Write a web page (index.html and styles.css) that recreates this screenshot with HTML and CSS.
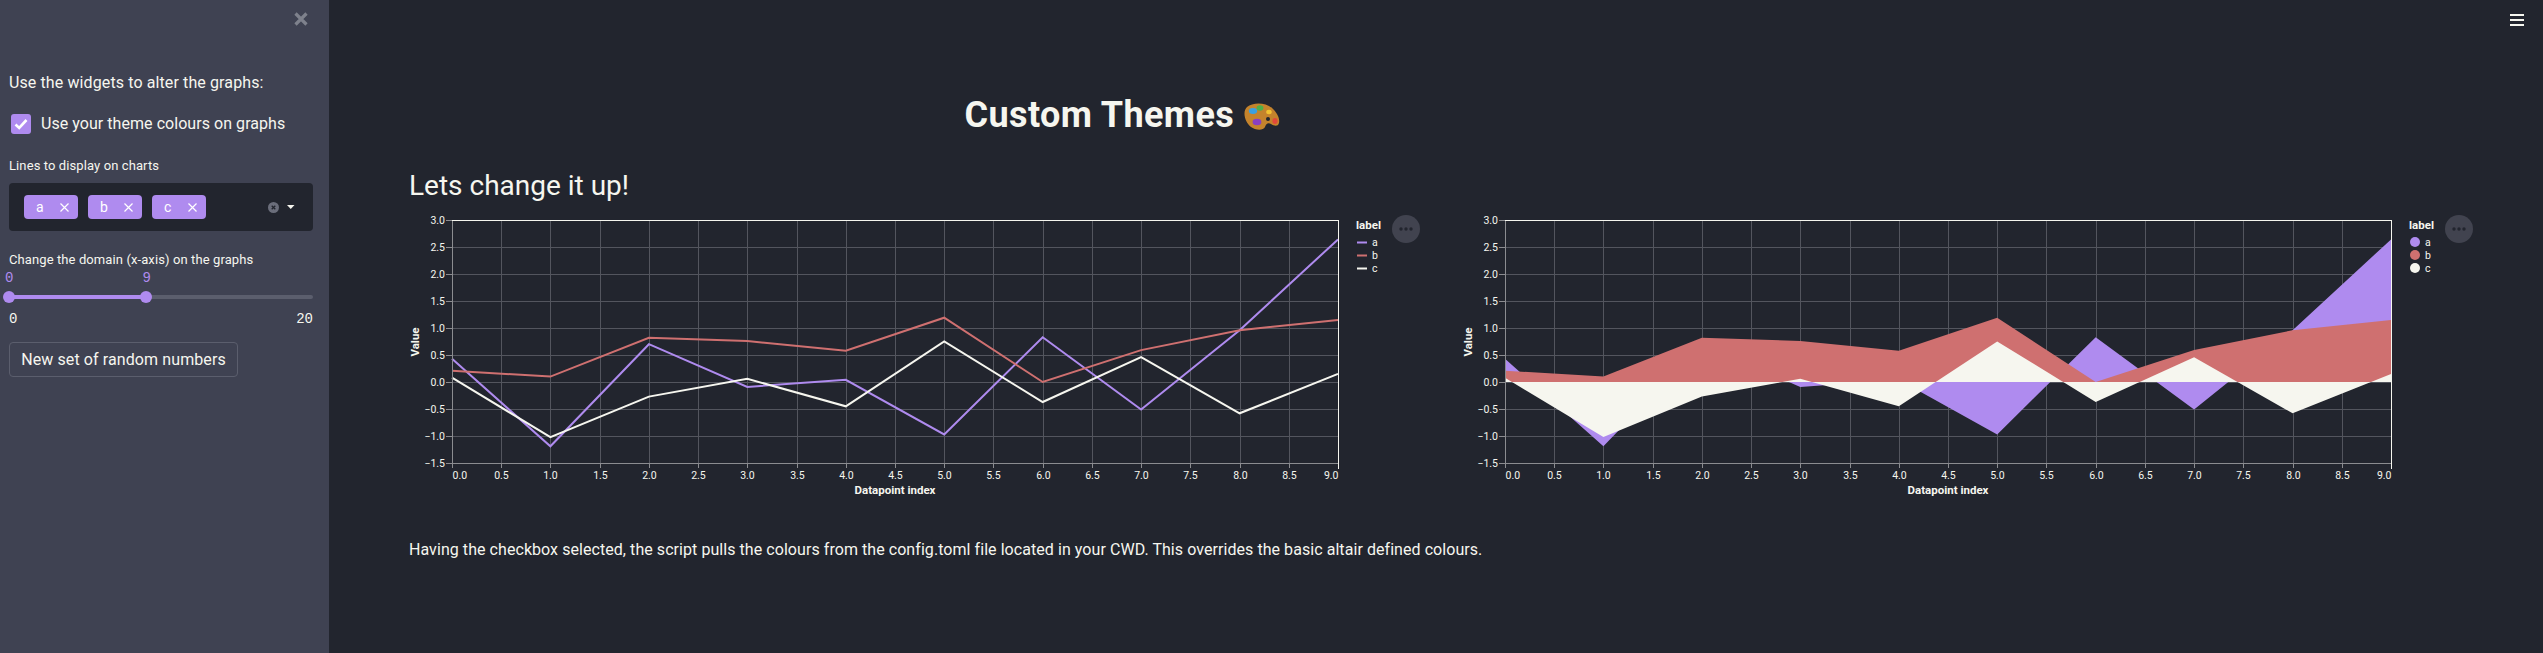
FILE: index.html
```html
<!DOCTYPE html>
<html lang="en">
<head>
    <meta charset="UTF-8">
    <title>Custom Themes</title>
    <link rel="stylesheet" href="styles.css">
</head>
<body>
<div class="app">
    <div class="sidebar">
        <div class="side-close">
            <svg width="14" height="14" viewBox="0 0 14 14"><path d="M1.5 1.5L12.5 12.5M12.5 1.5L1.5 12.5" stroke="#7e818c" stroke-width="3.2" fill="none"/></svg>
        </div>
        <p class="side-intro">Use the widgets to alter the graphs:</p>
        <div class="check-row">
            <span class="check-box">
                <svg width="14" height="12" viewBox="0 0 14 12"><path d="M1.5 6.5L5.2 10L12.5 2" stroke="#fff" stroke-width="2.6" fill="none"/></svg>
            </span>
            <span>Use your theme colours on graphs</span>
        </div>
        <div class="field-label">Lines to display on charts</div>
        <div class="multi">
            <span class="tag">a<svg width="9" height="9" viewBox="0 0 9 9"><path d="M0.5 0.5L8.5 8.5M8.5 0.5L0.5 8.5" stroke="#fff" stroke-width="1.2"/></svg></span>
            <span class="tag">b<svg width="9" height="9" viewBox="0 0 9 9"><path d="M0.5 0.5L8.5 8.5M8.5 0.5L0.5 8.5" stroke="#fff" stroke-width="1.2"/></svg></span>
            <span class="tag">c<svg width="9" height="9" viewBox="0 0 9 9"><path d="M0.5 0.5L8.5 8.5M8.5 0.5L0.5 8.5" stroke="#fff" stroke-width="1.2"/></svg></span>
            <span class="multi-end">
                <svg width="11" height="11" viewBox="0 0 11 11"><circle cx="5.5" cy="5.5" r="5.5" fill="#6b6e7b"/><path d="M3.7 3.7L7.3 7.3M7.3 3.7L3.7 7.3" stroke="#22252e" stroke-width="1.3"/></svg>
                <svg width="8" height="4" viewBox="0 0 8 4"><path d="M0 0H7.5L3.75 4Z" fill="#f6f6ef"/></svg>
            </span>
        </div>
        <div class="field-label slider-label">Change the domain (x-axis) on the graphs</div>
        <div class="slider">
            <div class="slider-vals"><span>0</span><span class="val-nine">9</span></div>
            <div class="track">
                <div class="track-fill"></div>
                <span class="thumb thumb-a"></span>
                <span class="thumb thumb-b"></span>
            </div>
            <div class="slider-ends"><span>0</span><span>20</span></div>
        </div>
        <button class="btn">New set of random numbers</button>
    </div>
    <div class="main">
        <div class="hamburger"><span></span><span></span><span></span></div>
        <h1 class="title">Custom Themes
            <svg class="palette" width="36" height="28" viewBox="0 0 36 28">
                <path d="M3 4C9 -1 22 -1 29 6C33 10 36 15 35 20C34 24 30 23 27 21C24 19 22 21 21 24C19 28 11 27 7 24C1 19 -2 9 3 4Z" fill="#c4832c"/>
                <ellipse cx="9" cy="8" rx="4.2" ry="3" fill="#3aa0e0"/>
                <ellipse cx="16" cy="5" rx="3.4" ry="2.8" fill="#4cb04a"/>
                <ellipse cx="25" cy="9" rx="2.8" ry="2.2" fill="#f2c230"/>
                <ellipse cx="13" cy="19" rx="4.4" ry="3.2" fill="#8a3fc0"/>
                <ellipse cx="31" cy="18" rx="2.6" ry="3" fill="#e2483a"/>
                <circle cx="24" cy="16" r="2" fill="#22252e"/>
            </svg>
        </h1>
        <h2 class="sub">Lets change it up!</h2>
        <div class="charts">
            <div class="chart" id="lineChart"></div>
            <div class="chart" id="areaChart"></div>
        </div>
        <p class="note">Having the checkbox selected, the script pulls the colours from the config.toml file located in your CWD. This overrides the basic altair defined colours.</p>
    </div>
</div>
<script src="chart.js"></script>
</body>
</html>
```
FILE: styles.css
```css
* {
    box-sizing: border-box;
    margin: 0;
    padding: 0;
}

html, body {
    height: 100%;
    overflow: hidden;
    background: #22252e;
}

body {
    font-family: "Roboto", "Noto Sans", sans-serif;
    color: #f6f6ef;
    font-size: 16px;
}

.app {
    display: flex;
    height: 100%;
}

/* sidebar */
.sidebar {
    width: 329px;
    flex: none;
    background: #3f4252;
    padding: 0 16px 0 9px;
}

.side-close {
    display: flex;
    justify-content: flex-end;
    padding: 12px 5px 0 0;
    height: 71px;
}

.side-intro {
    line-height: 24px;
    letter-spacing: .11px;
}

.check-row {
    display: flex;
    align-items: center;
    gap: 10px;
    margin: 17px 0 0 2px;
    line-height: 24px;
    letter-spacing: .05px;
}

.check-box {
    width: 20px;
    height: 20px;
    border-radius: 3px;
    background: #af8bef;
    display: flex;
    align-items: center;
    justify-content: center;
}

.field-label {
    font-size: 13px;
    line-height: 18px;
    margin-top: 21px;
    letter-spacing: .1px;
}

.multi {
    height: 48px;
    margin-top: 8px;
    background: #22252e;
    border-radius: 4px;
    display: flex;
    align-items: center;
    gap: 10px;
    padding-left: 15px;
}

.tag {
    width: 54px;
    height: 24px;
    background: #af8bef;
    border-radius: 4px;
    color: #fff;
    font-size: 14px;
    display: flex;
    align-items: center;
    justify-content: space-between;
    padding: 0 9px 0 12px;
}

.multi-end {
    margin-left: auto;
    display: flex;
    align-items: center;
    gap: 8px;
    padding-right: 18px;
}

.slider-label {
    margin-top: 20px;
}

.slider {
    font-family: "Liberation Mono", "DejaVu Sans Mono", monospace;
    font-size: 14px;
}

.slider-vals {
    display: flex;
    height: 18px;
    line-height: 18px;
    color: #af8bef;
    margin-left: -4px;
}

.val-nine {
    margin-left: 129px;
}

.track {
    position: relative;
    height: 4px;
    margin-top: 8px;
    background: #5b5e6d;
    border-radius: 2px;
}

.track-fill {
    width: 137px;
    height: 4px;
    background: #af8bef;
}

.thumb {
    position: absolute;
    top: -4px;
    width: 12px;
    height: 12px;
    margin-left: -6px;
    border-radius: 50%;
    background: #af8bef;
}

.thumb-a {
    left: 0;
}

.thumb-b {
    left: 137px;
}

.slider-ends {
    display: flex;
    justify-content: space-between;
    line-height: 18px;
    margin-top: 11px;
}

.btn {
    display: block;
    width: 229px;
    height: 35px;
    margin-top: 14px;
    background: transparent;
    border: 1px solid #5b5e6d;
    border-radius: 4px;
    color: #f6f6ef;
    font-family: inherit;
    font-size: 16px;
    letter-spacing: .1px;
}

/* main area */
.main {
    flex: 1;
    position: relative;
    padding: 0 0 0 80px;
}

.hamburger {
    position: absolute;
    right: 19px;
    top: 14px;
    width: 14px;
    display: flex;
    flex-direction: column;
    gap: 3px;
}

.hamburger span {
    height: 2px;
    background: #f6f6ef;
}

.title {
    width: 1426px;
    margin-top: 92px;
    height: 46px;
    font-size: 36px;
    line-height: 46px;
    font-weight: 700;
    text-align: center;
    letter-spacing: .4px;
}

.palette {
    vertical-align: -4px;
}

.sub {
    font-size: 28px;
    font-weight: 400;
    line-height: 36px;
    margin-top: 30px;
}

.charts {
    display: flex;
    gap: 16px;
    margin-top: 8px;
}

.chart {
    width: 1037px;
    height: 290px;
}

.chart svg {
    display: block;
}

.tick-label {
    font-size: 10.5px;
    fill: #f6f6ef;
}

.axis-title {
    font-size: 11.5px;
    font-weight: 700;
    fill: #f6f6ef;
}

.note {
    line-height: 24px;
    margin-top: 36px;
    letter-spacing: .06px;
}
```
FILE: chart.js
```js
// same ten points drive the line chart and the area chart
var series = [
    {name: "a", color: "#af8bef", values: [0.43, -1.19, 0.70, -0.09, 0.04, -0.97, 0.83, -0.51, 0.96, 2.64]},
    {name: "b", color: "#cf7070", values: [0.21, 0.10, 0.82, 0.76, 0.58, 1.19, 0.00, 0.59, 0.96, 1.15]},
    {name: "c", color: "#f6f6ef", values: [0.08, -1.02, -0.27, 0.06, -0.45, 0.75, -0.37, 0.46, -0.58, 0.15]}
];

var left = 43, top0 = 8, plotW = 886, plotH = 243;

function xPos(v) {
    return left + v / 9 * plotW;
}

function yPos(v) {
    return top0 + (3 - v) / 4.5 * plotH;
}

function label(x, y, text, anchor, cls) {
    return '<text class="' + (cls || "tick-label") + '" x="' + x + '" y="' + y + '" text-anchor="' + anchor + '">' + text + '</text>';
}

function line(x1, y1, x2, y2, color) {
    return '<line x1="' + x1 + '" y1="' + y1 + '" x2="' + x2 + '" y2="' + y2 + '" stroke="' + color + '"/>';
}

function drawChart(id, kind) {
    var grid = "", marks = "", axes = "", legend = "";
    var i, x, y, name;

    // grid + ticks
    for (i = 0; i <= 9; i++) {
        y = Math.round(yPos(3 - i * 0.5)) + 0.5;
        if (i > 0 && i < 9) grid += line(left, y, left + plotW, y, "#53555e");
        axes += line(left - 6, y, left, y, "#8b8c90");
        name = (3 - i * 0.5).toFixed(1).replace("-", "\u2212");
        axes += label(left - 7, y + 3.5, name, "end");
    }
    for (i = 0; i <= 18; i++) {
        x = Math.round(xPos(i * 0.5)) + 0.5;
        if (i > 0 && i < 18) grid += line(x, top0, x, top0 + plotH, "#53555e");
        axes += line(x, top0 + plotH, x, top0 + plotH + 5, "#8b8c90");
        axes += label(x, top0 + plotH + 15.5, (i * 0.5).toFixed(1), i === 0 ? "start" : (i === 18 ? "end" : "middle"));
    }

    // marks
    series.forEach(function (s, n) {
        var pts = s.values.map(function (v, k) {
            return xPos(k).toFixed(1) + "," + yPos(v).toFixed(1);
        }).join(" ");
        if (kind === "line") {
            marks += '<polyline points="' + pts + '" fill="none" stroke="' + s.color + '" stroke-width="2"/>';
            legend += line(left + 905, 30.5 + n * 13, left + 915, 30.5 + n * 13, s.color).replace("/>", ' stroke-width="2"/>');
            legend += label(left + 920, 34 + n * 13, s.name, "start");
        } else {
            pts = xPos(0) + "," + yPos(0) + " " + pts + " " + xPos(9) + "," + yPos(0);
            marks += '<polygon points="' + pts + '" fill="' + s.color + '"/>';
            legend += '<circle cx="' + (left + 910) + '" cy="' + (30 + n * 13) + '" r="5" fill="' + s.color + '"/>';
            legend += label(left + 920, 34 + n * 13, s.name, "start");
        }
    });

    // frame: grey on the axes, white on top and right
    axes += line(left + 0.5, top0 + 0.5, left + 0.5, top0 + plotH + 0.5, "#8b8c90");
    axes += line(left, top0 + plotH + 0.5, left + plotW + 1, top0 + plotH + 0.5, "#8b8c90");
    axes += line(left, top0 + 0.5, left + plotW + 1, top0 + 0.5, "#f6f6ef");
    axes += line(left + plotW + 0.5, top0, left + plotW + 0.5, top0 + plotH + 6, "#f6f6ef");

    axes += label(left + plotW / 2, top0 + plotH + 31, "Datapoint index", "middle", "axis-title");
    axes += '<text class="axis-title" text-anchor="middle" transform="translate(10,130) rotate(-90)">Value</text>';
    legend += label(left + 904, 17, "label", "start", "axis-title");

    // the "..." menu button
    var dots = '<circle cx="' + (left + 954) + '" cy="17" r="14" fill="#41434f"/>';
    for (i = -1; i <= 1; i++) {
        dots += '<circle cx="' + (left + 954 + i * 5) + '" cy="17" r="1.7" fill="#22252e"/>';
    }

    document.getElementById(id).innerHTML = '<svg width="1037" height="290" viewBox="0 0 1037 290">' + grid + marks + axes + legend + dots + '</svg>';
}

drawChart("lineChart", "line");
drawChart("areaChart", "area");
```
